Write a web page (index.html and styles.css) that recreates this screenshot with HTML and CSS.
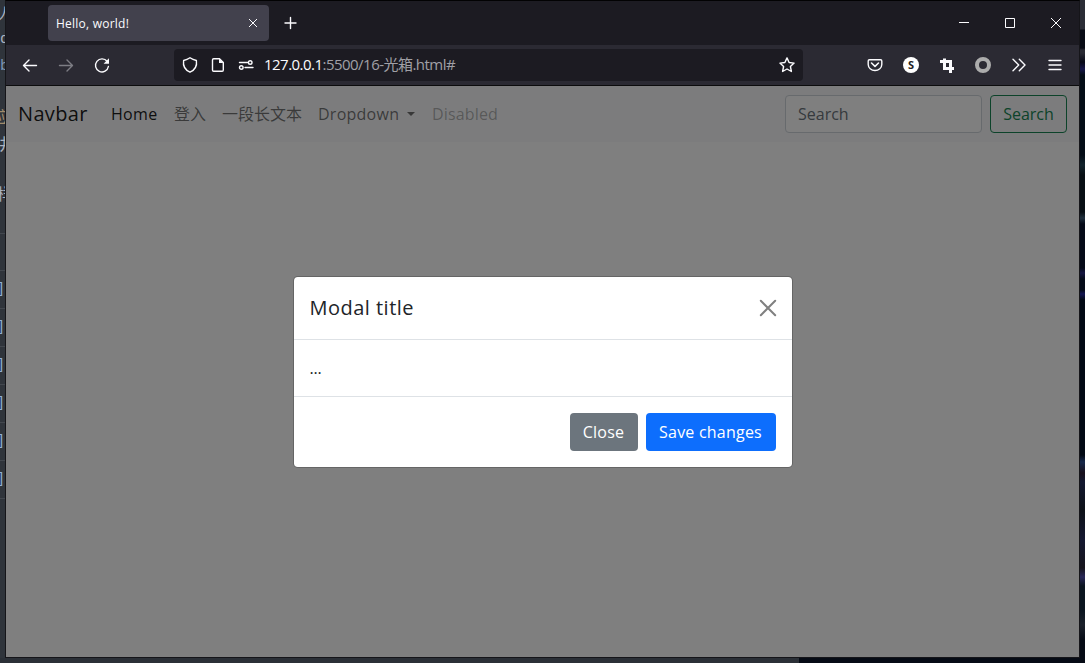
FILE: index.html
```html
<!DOCTYPE html>
<html lang="zh">
<head>
<meta charset="utf-8">
<title>Hello, world!</title>
<link rel="stylesheet" href="styles.css">
</head>
<body>
<div class="desktop">
  <div class="editor">
    <span class="frag cjk f1">人</span><span class="frag f2">d</span><span class="frag f3">b</span>
    <span class="frag cjk f4">应</span><span class="frag cjk f5">井</span><span class="frag cjk f6">样</span>
    <div class="rows"><i></i><i>]</i><i>]</i><i>]</i><i>]</i><i>]</i><i>]</i><i></i></div>
  </div>
  <div class="editor-foot"></div>
  <div class="wall"></div>
  <div class="window">
    <div class="tabbar">
      <div class="tab"><span class="tab-title">Hello, world!</span>
        <svg width="10" height="10" viewBox="0 0 10 10"><path d="M1 1l8 8M9 1l-8 8" class="s"/></svg></div>
      <svg class="plus" width="12" height="12" viewBox="0 0 12 12"><path d="M5.500 .5v11M0 6h11" class="s m"/></svg>
      <div class="controls">
        <svg width="10" height="10" viewBox="0 0 10 10"><path d="M0 4.5h10" class="s"/></svg>
        <svg width="10" height="10" viewBox="0 0 10 10"><path d="M.5 .5h9v9h-9z" class="s"/></svg>
        <svg width="10" height="10" viewBox="0 0 10 10"><path d="M0 0l10 10M10 0L0 10" class="s"/></svg>
      </div>
    </div>
    <div class="toolbar">
      <div class="history">
        <svg width="16" height="16" viewBox="0 0 16 16"><path d="M14.500 8.500H1.500M7 3L1.500 8.500 7 14" class="s m"/></svg>
        <svg class="off" width="16" height="16" viewBox="0 0 16 16"><path d="M1.500 8.500h13M9 3l5.500 5.500L9 14" class="s m"/></svg>
        <svg width="16" height="16" viewBox="0 0 16 16"><path d="M13.200 4.500A6.500 6.500 0 1 0 14.400 9.500" class="s m"/><path d="M15 1.300v5.400H9.600z" fill="#fbfbfe"/></svg>
      </div>
      <div class="urlbar">
        <svg width="16" height="16" viewBox="0 0 16 16"><path d="M8 .8C6 2.2 4 3 1.600 3.500 1 7.500 2.400 12.600 8 15.200 13.600 12.600 15 7.500 14.400 3.500 12 3 10 2.200 8 .8z" class="s m"/></svg>
        <svg width="16" height="16" viewBox="0 0 16 16"><path d="M3.700 1.700h5.800l3.800 3.800v7.600q0 1.200-1.200 1.200H3.700q-1.200 0-1.200-1.200V2.900q0-1.200 1.200-1.200z" class="s m"/><path d="M9 1.500v4.500h4.500z" fill="#fbfbfe"/></svg>
        <svg width="16" height="16" viewBox="0 0 16 16"><path d="M1.500 5.500h8M7 10.500h8" class="s m"/><circle cx="12.200" cy="5.500" r="1.800" class="s m"/><circle cx="3.300" cy="10.500" r="1.800" class="s m"/></svg>
        <div class="url"><b>127.0.0.1</b>:5500/16-光箱.html#</div>
        <svg class="star" width="16" height="16" viewBox="0 0 16 16"><path d="M8 .9l2.100 4.600 5 .6-3.700 3.400 1 5L8 12l-4.400 2.500 1-5L.9 6.100l5-.6z" class="s m"/></svg>
      </div>
      <div class="tools">
        <svg width="16" height="16" viewBox="0 0 16 16"><path d="M2.400 2.700h11.200q1.200 0 1.200 1.200v3.600a6.800 6 0 0 1-13.600 0V3.900q0-1.200 1.200-1.200z" class="s m"/><path d="M4.500 6L8 9.300 11.500 6" class="s t"/></svg>
        <span class="badge">S</span>
        <svg width="16" height="16" viewBox="0 0 16 16"><path d="M1 4.500h10.500V16M5.500 1.500v10H15" class="s x"/></svg>
        <span class="ring"></span>
        <svg width="16" height="16" viewBox="0 0 16 16"><path d="M2 2.300L7.700 8 2 13.700M8.300 2.300L14 8l-5.700 5.700" class="s m"/></svg>
        <svg width="16" height="16" viewBox="0 0 16 16"><path d="M2 3.500h12M2 8h12M2 12.500h12" class="s m"/></svg>
      </div>
    </div>
    <div class="page">
      <nav class="navbar">
        <a class="brand">Navbar</a>
        <a class="link home">Home</a>
        <a class="link login">登入</a>
        <a class="link long">一段长文本</a>
        <a class="link drop">Dropdown<span class="caret"></span></a>
        <a class="link disabled">Disabled</a>
        <div class="field">Search</div>
        <div class="btn outline">Search</div>
      </nav>
      <div class="backdrop">
        <div class="modal">
          <div class="modal-header"><span class="title">Modal title</span>
            <svg width="16" height="16" viewBox="0 0 16 16"><path d="M.8 .8l14.400 14.400M15.200 .8L.8 15.200" class="close"/></svg></div>
          <div class="modal-body">...</div>
          <div class="modal-footer"><div class="btn grey">Close</div><div class="btn blue">Save changes</div></div>
        </div>
      </div>
    </div>
  </div>
</div>
</body>
</html>
```
FILE: styles.css
```css
* { box-sizing: border-box; }
body { margin: 0; font: 16px/24px "Open Sans", "Noto Sans CJK SC", sans-serif; }
.desktop { position: relative; width: 1085px; height: 663px; overflow: hidden; background: #2e333a; }
svg { display: block; flex: none; overflow: visible; }
.s { fill: none; stroke: #fbfbfe; stroke-width: 1; }
.m { stroke-width: 1.4; stroke-linecap: round; stroke-linejoin: round; }
.t { stroke-width: 1.6; stroke-linecap: round; stroke-linejoin: round; }
.x { stroke-width: 3; }

.editor { position: absolute; left: 0; top: 0; width: 5px; height: 663px; overflow: hidden; background: #2f343b; color: #a9b2c0; }
.frag { position: absolute; right: 0; font: 15px/20px "Liberation Mono", monospace; }
.cjk { font: 16px/20px "Noto Sans CJK SC", sans-serif; }
.f1 { top: 3px; right: -8px; }
.f2 { top: 30px; right: -4px; }
.f3 { top: 57px; right: -4px; color: #7d94b5; }
.f4 { top: 106px; right: -5px; color: #a08b6c; }
.f5 { top: 133px; right: -10px; }
.f6 { top: 183px; right: -8px; }
.rows { position: absolute; top: 233px; left: 0; width: 5px; }
.rows i { display: flex; justify-content: flex-end; align-items: center; height: 38px; padding-bottom: 2px; border-top: 1px solid #42474e; font: 14px "Liberation Mono", monospace; color: #8fb0d8; }
.rows i:first-child { height: 37px; }
.editor-foot { position: absolute; left: 0; top: 658px; width: 799px; height: 5px; background: #2b3037; }
.wall { position: absolute; left: 799px; top: 0; width: 286px; height: 663px; background: linear-gradient(#2b2d36 0 29px, #080b15 30px 48px, #292a34 50px 53px, #070917 62px, #17174a 69px, #040d17 75px 155px, #12232c 165px, #080f14 175px 212px, #202f3d 218px, #050a18 224px 268px, #161642 273px, #050b19 279px 290px, #141653 294px, #020914 300px 455px, #17284b 462px, #170f1b 473px, #131830 482px, #0d1118 510px, #151831 540px, #16141c 568px, #292758 577px, #0b1520 586px 610px, #1b212b 625px, #060b15 640px); }

.window { position: absolute; left: 5px; top: 0; width: 1075px; height: 658px; display: flex; flex-direction: column; border: 1px solid #151519; border-top-color: #020203; background: #1c1b22; }
.tabbar { display: flex; align-items: center; height: 44px; padding-left: 42px; background: #1c1b22; }
.tab { display: flex; align-items: center; justify-content: space-between; width: 221px; height: 36px; padding: 0 11px 0 8px; border-radius: 4px; background: #42414d; color: #fbfbfe; font-size: 12px; letter-spacing: .23px; }
.tab-title { padding-top: 1px; }
.plus { margin-left: 16px; }
.controls { display: flex; gap: 36px; margin-left: auto; padding-right: 18px; }
.toolbar { display: flex; align-items: center; height: 41px; padding-bottom: 1px; background: #2b2a33; border-bottom: 1px solid #0c0c0d; }
.history { display: flex; gap: 20px; width: 168px; padding-left: 16px; }
.off { opacity: .4; }
.urlbar { display: flex; align-items: center; gap: 12px; width: 629px; height: 32px; padding: 0 8px; border-radius: 4px; background: #1c1b22; }
.url { margin-left: -2px; padding-bottom: 2px; color: #a0a0a6; font-size: 15px; letter-spacing: -.53px; white-space: nowrap; }
.url b { color: #fbfbfe; font-weight: 400; }
.star { margin-left: auto; }
.tools { display: flex; align-items: center; gap: 20px; margin-left: auto; padding-right: 16px; }
.badge { width: 16px; height: 16px; border-radius: 50%; background: #fff; color: #222; font: 700 11px/16px "Open Sans", sans-serif; text-align: center; }
.ring { width: 16px; height: 16px; border: 4px solid #acacac; border-radius: 50%; }

.page { position: relative; flex: 1; background: #fff; }
.navbar { display: flex; align-items: center; height: 56px; padding: 0 12px; background: #f8f9fa; white-space: nowrap; }
.brand { width: 93px; font-size: 20px; letter-spacing: .35px; color: rgba(0,0,0,.9); }
.link { color: rgba(0,0,0,.55); }
.home { width: 63px; letter-spacing: .3px; color: rgba(0,0,0,.9); }
.login { width: 48px; }
.long { width: 96px; }
.drop { display: flex; align-items: center; width: 114px; letter-spacing: .25px; }
.caret { margin-left: 8px; border: 4px solid transparent; border-top-color: currentColor; border-bottom: 0; }
.disabled { letter-spacing: .15px; color: rgba(0,0,0,.3); }
.field { width: 197px; height: 38px; margin: 0 8px 0 auto; padding: 6px 12px; border: 1px solid #ced4da; border-radius: 4px; background: #fff; color: #6c757d; }
.btn { display: flex; align-items: center; justify-content: center; height: 38px; border-radius: 4px; color: #fff; white-space: nowrap; }
.outline { width: 77px; border: 1px solid #198754; color: #198754; }
.backdrop { position: absolute; inset: 0; display: flex; align-items: center; justify-content: center; background: rgba(0,0,0,.5); }
.modal { width: 500px; height: 192px; border: 1px solid rgba(0,0,0,.2); border-radius: 4.8px; background: #fff; background-clip: padding-box; color: #212529; }
.modal-header { display: flex; align-items: center; justify-content: space-between; height: 63px; padding: 0 16px; border-bottom: 1px solid #dee2e6; }
.title { font-size: 20px; letter-spacing: .48px; }
.close { fill: none; stroke: #808080; stroke-width: 2; stroke-linecap: round; }
.modal-body { height: 56px; padding: 16px; letter-spacing: -.2px; }
.modal-footer { display: flex; justify-content: flex-end; gap: 8px; padding: 16px; border-top: 1px solid #dee2e6; }
.grey { width: 68px; letter-spacing: .2px; background: #6c757d; }
.blue { width: 130px; letter-spacing: .22px; background: #0d6efd; }
```
